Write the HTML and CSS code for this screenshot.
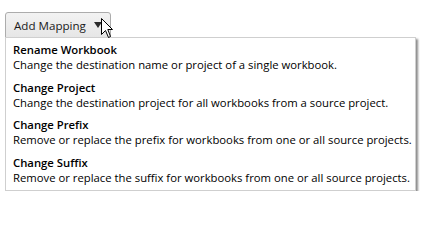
FILE: index.html
```html
<!DOCTYPE html>
<html>
<head>
<meta charset="utf-8">
<link rel="stylesheet" href="styles.css">
</head>
<body>
<div class="page">
  <div class="dropdown">
    <button class="btn">
      <span class="btn-label">Add Mapping</span>
      <svg class="caret" width="8" height="6" viewBox="0 0 8 6"><path d="M0 0 H8 L4 6 Z" fill="#2b2b2b"/></svg>
    </button>
    <ul class="menu">
      <li class="item">
        <div class="title">Rename Workbook</div>
        <div class="desc">Change the destination name or project of a single workbook.</div>
      </li>
      <li class="item">
        <div class="title">Change Project</div>
        <div class="desc">Change the destination project for all workbooks from a source project.</div>
      </li>
      <li class="item">
        <div class="title">Change Prefix</div>
        <div class="desc">Remove or replace the prefix for workbooks from one or all source projects.</div>
      </li>
      <li class="item">
        <div class="title">Change Suffix</div>
        <div class="desc">Remove or replace the suffix for workbooks from one or all source projects.</div>
      </li>
    </ul>
    <svg class="cursor" width="13" height="21" viewBox="0 0 13 21"><path d="M0.5 0.5 L0.5 16.5 L4.5 12.5 L7.5 19.5 L9.5 18.5 L6.8 11.5 L11.5 11.5 Z" fill="#fff" stroke="#000" stroke-width="1" stroke-linejoin="miter"/></svg>
  </div>
</div>
</body>
</html>
```
FILE: styles.css
```css
html, body {
  margin: 0;
  padding: 0;
  background: #fff;
}
.page {
  padding: 12px 0 0 5px;
  font-family: "Segoe UI", "Open Sans", "Noto Sans", sans-serif;
  font-size: 11.3px;
  color: #000;
}
.dropdown {
  position: relative;
  width: 414px;
}
.btn {
  display: flex;
  align-items: center;
  gap: 8px;
  box-sizing: border-box;
  width: 106px;
  height: 26px;
  margin: 0;
  padding: 0 0 0 8px;
  border: 1px solid #acacac;
  border-radius: 3px 3px 0 0;
  background: linear-gradient(#f2f2f2, #e6e6e6);
  font: inherit;
  font-size: 11.6px;
  color: #1a1a1a;
}
.btn-label {
  line-height: 15px;
}
.caret {
  display: block;
}
.menu {
  list-style: none;
  margin: -1px 0 0 0;
  padding: 4px 0 5px 0;
  box-sizing: border-box;
  width: 411px;
  border: 1px solid #cfcfcf;
  background: #fff;
  box-shadow: 2px 2px 2px rgba(0, 0, 0, 0.45);
  display: flex;
  flex-direction: column;
  gap: 7.5px;
}
.item {
  padding: 0 7px;
  line-height: 15px;
  white-space: nowrap;
}
.title {
  font-weight: 600;
}
.cursor {
  position: absolute;
  left: 96px;
  top: 6px;
}
```
